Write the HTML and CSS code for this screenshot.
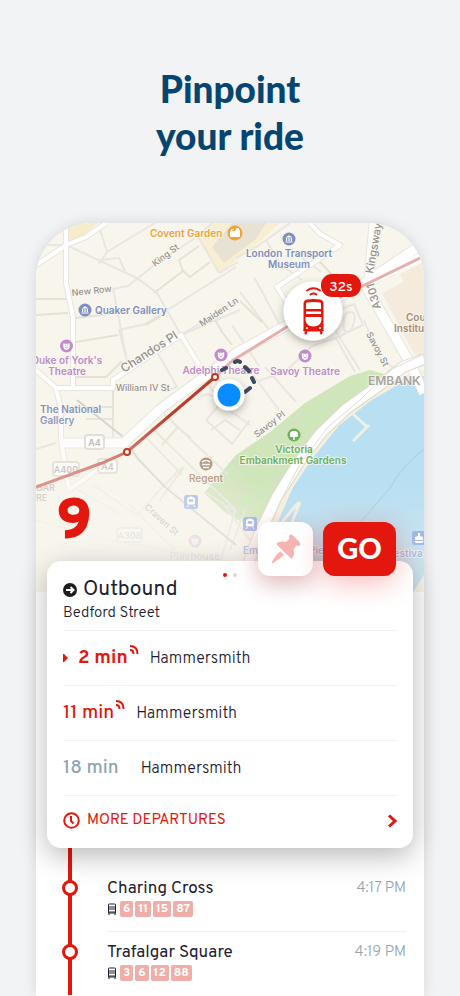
FILE: index.html
```
<!DOCTYPE html>
<html lang="en">
<head>
    <meta charset="UTF-8">
    <meta name="viewport" content="width=device-width, initial-scale=1.0">
    <title>Pinpoint your ride</title>
    <link rel="stylesheet" href="styles.css">
</head>
<body>
    <h1>Pinpoint<br>your ride</h1>

    <main class="phone">
        <svg class="map" viewBox="36 223 388 369" role="img" aria-label="Map of the route 9 bus">
            <defs>
                <radialGradient id="fade" gradientUnits="userSpaceOnUse" cx="95" cy="590" r="190">
                    <stop offset="0" stop-color="#f8f5ee"/>
                    <stop offset="0.45" stop-color="#f8f5ee" stop-opacity="0.7"/>
                    <stop offset="1" stop-color="#f8f5ee" stop-opacity="0"/>
                </radialGradient>
                <linearGradient id="fadeDown" x1="0" y1="0" x2="0" y2="1">
                    <stop offset="0" stop-color="#f8f5ee" stop-opacity="0"/>
                    <stop offset="1" stop-color="#f8f5ee" stop-opacity="0.4"/>
                </linearGradient>
                <filter id="drop" x="-50%" y="-50%" width="200%" height="200%">
                    <feDropShadow dx="0" dy="3" stdDeviation="4" flood-opacity="0.3"/>
                </filter>
                <g id="mask">
                    <circle r="6.5"/>
                    <path d="M-3.2-2.8Q0-1.8 3.2-2.8V.5Q3 3.3 0 4Q-3 3.3-3.2.5Z" fill="#fff"/>
                    <path d="M-1.6-.8h.8M.8-.8h.8M-1.4 1.2Q0 2.6 1.4 1.2" stroke="#c79bd0" fill="none"/>
                </g>
                <g id="museum">
                    <circle r="6.5"/>
                    <path d="M-3.6-1.6L0-3.8 3.6-1.6ZM-3.6 2.4h7.2v1.2h-7.2ZM-3-1h1.2v3H-3ZM-.6-1H.6v3H-.6ZM1.8-1H3v3H1.8Z" fill="#fff"/>
                </g>
                <g id="station">
                    <rect x="-7" y="-7" width="14" height="14" rx="2.5"/>
                    <path d="M-3.5-3Q-3.500-5 0-5T3.500-3V2H-3.500ZM-2.500 3L-4 5M2.500 3L4 5" fill="#fff" stroke="#fff"/>
                    <path d="M-2.200-2.800H2.200V-.3H-2.200Z"/>
                </g>
            </defs>

            <rect x="36" y="223" width="388" height="369" fill="#f8f5ec"/>

            <!-- blocks, park, river -->
            <path d="M68 223H98L86 234 68 242Z" fill="#f6ebcb"/>
            <path d="M196 237L212 223H280L262 240 220 273Z" fill="#f8efd2"/>
            <path d="M212 247L232 223H266L256 239 224 263Z" fill="#e8e2d5"/>
            <path d="M382 293L404 282 400 274 424 262V360L413 352Z" fill="#f5ebdd"/>
            <path d="M204 493L236 455 270 432 305 403 350 376 370 370 388 375 350 400 318 430 295 470 268 522 255 530 225 512Z" fill="#cfe6bb"/>
            <path d="M424 376L400 382 370 401 340 424 313 457 293 487 278 520 266 592H413L424 575Z" fill="#b8dff2"/>
            <path d="M424 372L398 382 370 398 338 423 311 456 290 487 276 520 264 592" class="shore"/>
            <path d="M352 413L367 427M353 441L369 425" class="pier"/>
            <path d="M300 502L289 530M282 522L299 502" class="pier"/>
            <path d="M424 449Q400 468 390 488L345 540" fill="none" stroke="#a5cbe1"/>

            <!-- small streets -->
            <g class="lane">
                <path d="M36 245H66L137 278 157 293 181 335 240 310"/>
                <path d="M181 335L236 301M113 289L128 286 157 263 198 236 219 273"/>
                <path d="M113 288L127 361 119 330 145 324 236 267"/>
                <path d="M100 230L107 252 99 264M100 260L119 258 125 271M107 252L130 238 155 223"/>
                <path d="M198 236L212 223M219 273L238 262M157 352L177 387 165 391"/>
                <path d="M236 258L258 246 290 223M266 240L280 264 302 280M302 290L335 330 360 370"/>
                <path d="M232 325L259 366M240 292L274 336M254 277L281 327M290 249L321 272"/>
                <path d="M342 309L354 304 363 325 336 338 312 346 285 372 258 381M336 338L355 372"/>
                <path d="M251 372L279 410M265 367L296 402M364 320L378 356 397 371"/>
                <path d="M200 372L222 405 250 425M198 400Q206 388 222 402L206 420 232 444 250 420"/>
                <path d="M151 427L205 480 236 510M164 414L228 475M175 425L191 438M145 436L182 475M211 430L225 420 240 430"/>
                <path d="M93 485L137 515 160 490 181 468M78 490L120 514M140 525L100 552 60 546M128 503L175 550"/>
                <path d="M205 492L235 511 221 560M224 505L250 540M230 550L245 510M36 520L100 538 220 560"/>
            </g>
            <g class="block">
                <path d="M36 299H66M36 315L68 313M75 318L110 314M76 342L118 335M75 377H106L122 361"/>
                <path d="M154 293L183 271 179 260 199 246M183 271L190 277 210 262M145 325L165 314"/>
                <path d="M240 301L262 322M318 260L338 281M113 390V437M36 449L56 443M86 407H113M86 419H113"/>
                <path d="M215 320L222 332 232 345M162 445L178 427M160 500L184 467"/>
            </g>
            <path d="M344 330Q342 312 350 312T352 328Q348 334 344 330" class="lane"/>
            <path d="M77 400L122 436 138 459 165 487 236 545" class="rail"/>
            <g class="path">
                <path d="M211 485L268 450 318 398 350 385M232 461L250 520M213 498Q230 475 256 497T270 475M224 469L240 515M268 434L275 449M290 418L301 425M236 520Q258 500 290 470"/>
                <path d="M246 448L252 481 232 506M275 449L282 486"/>
            </g>

            <!-- main streets -->
            <g class="road-edge">
                <path d="M424 243L363 284 236 353 159 410 124 443H62"/>
                <path d="M374 223L370 270 368 290 410 363 424 393"/>
            </g>
            <g class="road-edge thin">
                <path d="M66 223V283L73 317V387M36 265L56 252 66 245 86 237 106 223"/>
                <path d="M36 370L56 388H113V380L181 335 199 365M56 388L61 410V440L69 490M69 490L116 457"/>
                <path d="M310 223L320 234 340 245 277 287 287 303"/>
            </g>
            <g class="road">
                <path d="M66 223V283L73 317V387M36 265L56 252 66 245 86 237 106 223"/>
                <path d="M36 370L56 388H113V380L181 335 199 365M56 388L61 410V440L69 490M69 490L116 457"/>
                <path d="M310 223L320 234 340 245 277 287 287 303"/>
            </g>
            <g class="road wide">
                <path d="M424 243L363 284 236 353 159 410 124 443H62"/>
                <path d="M424 256L370 280M374 223L370 270 368 290 410 363 424 393"/>
            </g>
            <path d="M424 359L403 367 377 387 346 409 320 434 297 465 277 497 260 532 238 592" class="quay-edge"/>
            <path d="M424 359L403 367 377 387 346 409 320 434 297 465 277 497 260 532 238 592" class="quay"/>
            <path d="M424 354L392 369 361 399 328 427 300 464 280 502 263 547 245 592" class="quay-line"/>

            <!-- road and place names -->
            <g class="label street">
                <text transform="translate(155 267) rotate(-37)">King St</text>
                <text transform="translate(72 296) rotate(-6)">New Row</text>
                <text transform="translate(124 373) rotate(-33)" class="big">Chandos Pl</text>
                <text transform="translate(202 327) rotate(-34)">Maiden Ln</text>
                <text x="116" y="391">William IV St</text>
                <text transform="translate(373 274) rotate(-80)" class="kingsway">Kingsway</text>
                <text transform="translate(381 308) rotate(-106)" class="kingsway">A301</text>
                <text transform="translate(366 334) rotate(62)">Savoy St</text>
                <text transform="translate(257 438) rotate(-38)">Savoy Pl</text>
                <text transform="translate(144 508) rotate(42)">Craven St</text>
            </g>
            <g class="label district">
                <text x="368" y="385">EMBANK</text>
                <text x="36" y="491" class="faint">GAR</text>
                <text x="36" y="501" class="faint">RE</text>
            </g>
            <g class="shield">
                <rect x="85" y="435" width="19" height="14" rx="3"/><text x="94.500" y="446">A4</text>
                <rect x="98" y="459" width="19" height="14" rx="3"/><text x="107.500" y="470">A4</text>
                <rect x="53" y="462" width="26" height="14" rx="3"/><text x="66" y="473">A400</text>
                <rect x="117" y="528" width="25" height="14" rx="3"/><text x="129.500" y="539">A308</text>
            </g>
            <g class="label culture">
                <use href="#museum" x="85" y="310"/><text x="95" y="314">Quaker Gallery</text>
                <use href="#museum" x="289" y="239"/>
                <text x="289" y="257" class="mid">London Transport</text><text x="289" y="268" class="mid">Museum</text>
                <text x="40" y="413">The National</text><text x="40" y="424">Gallery</text>
            </g>
            <g class="label theatre">
                <use href="#mask" x="66.500" y="346"/>
                <text x="67" y="364" class="mid">Duke of York's</text><text x="67" y="375" class="mid">Theatre</text>
                <use href="#mask" x="221" y="355"/><text x="221" y="374" class="mid">Adelphi Theatre</text>
                <use href="#mask" x="305" y="356"/><text x="305" y="375" class="mid">Savoy Theatre</text>
                <g opacity="0.5"><use href="#mask" x="195" y="541"/><text x="195" y="560" class="mid">Playhouse</text></g>
            </g>
            <g class="label shop">
                <text x="150" y="237">Covent Garden</text>
                <circle cx="235" cy="233" r="7.500"/>
                <path d="M230.500 231.500H235V236.500H230.500ZM235.500 230.500H239.500V236.500H235.500ZM231.500 231V229.500H234M236.500 230V228.500H238.500V230" class="bag"/>
            </g>
            <g class="label school"><text x="406" y="321">Cou</text><text x="394" y="332">Institu</text></g>
            <g class="label garden">
                <circle cx="294" cy="435" r="6.500"/>
                <path d="M293.300 440V437Q289 437.500 290 434.500Q289.500 431 294 431T298 434.500Q299 437.500 294.700 437V440Z" fill="#fff"/>
                <text x="294" y="453" class="mid">Victoria</text><text x="293" y="464" class="mid">Embankment Gardens</text>
            </g>
            <g class="label hotel">
                <circle cx="206" cy="464" r="6.500"/>
                <path d="M202 462Q206 459 210 462M202 464.500H210M203 467.500H209" stroke="#fff" stroke-width="1.600" fill="none"/>
                <text x="206" y="482" class="mid">Regent</text>
            </g>
            <g class="label transit">
                <use href="#station" x="191" y="502"/>
                <use href="#station" x="250" y="524"/>
                <rect x="412" y="531" width="14" height="14" rx="2.500"/>
                <path d="M418 533h2v3l3 1v3h-8v-3l3-1ZM414 541h10l-2 2h-6Z" fill="#fff"/>
                <text x="243" y="554">Embankment Pier</text><text x="388" y="557">Festiva</text>
            </g>

            <!-- route -->
            <path d="M215 377L232 361 290 325 342 296 424 256" class="route-ahead"/>
            <path d="M36 487L102 463 127 452 215 377" class="route-done"/>
            <rect x="36" y="400" width="388" height="192" fill="url(#fade)"/>
            <rect x="36" y="480" width="388" height="112" fill="url(#fadeDown)"/>
            <path d="M222 370L226 368M235 362Q237 360 240 362M245 367L249 371M252 378L254 382M250 388L245 392" class="walk"/>
            <g class="stop-dot"><circle cx="127" cy="452" r="3"/><circle cx="215" cy="377" r="3"/></g>
            <g filter="url(#drop)"><circle cx="229" cy="395" r="15.500" fill="#fff"/></g>
            <circle cx="229" cy="395" r="11.500" fill="#078dff"/>

            <!-- live vehicle -->
            <g filter="url(#drop)"><circle cx="313" cy="311" r="29.500" fill="#fff"/></g>
            <g class="bus">
                <path d="M307 290.500Q313.500 286 320 290.500M310.500 294.500Q313.500 292.500 316.500 294.500" class="wave"/>
                <path fill-rule="evenodd" d="M307 299.500Q313.500 298.500 320 299.500Q323.500 300 323.500 304V329.500L324 331H322.500V333Q322.500 334.500 321.300 334.500T320 333V331.500H307V333Q307 334.500 305.700 334.500T304.500 333V331H303L303.500 329.500V304Q303.500 300 307 299.500ZM307 302.500Q306 302.800 306 304V309H321V304Q321 302.800 320 302.500Q313.500 301.500 307 302.500ZM306 311.500V314H321V311.500ZM305.500 317V320Q306.500 326.500 313.500 326.500T321.500 320V317Z"/>
                <circle cx="307" cy="328" r="1" fill="#fff"/><circle cx="320" cy="328" r="1" fill="#fff"/>
            </g>
            <rect x="321" y="274" width="40" height="23" rx="11" fill="#e3170d"/>
            <text x="341" y="291" class="eta">32s</text>
        </svg>

        <div class="route-bar">
            <strong class="route-number">9</strong>
            <button class="pin-button" aria-label="Pin this route">
                <svg width="30" height="30" viewBox="0 0 30 30" aria-hidden="true">
                    <path d="M18.500 1Q20.500 0 22 1.500L28.500 8Q30 10 28.500 11.500Q27.500 12 25.500 11.500L22.500 15.500Q24 20 21.500 24Q20.500 25 19.500 24L6 11Q5 10 6.500 8.800Q10 6.500 14.500 8L18.500 5Q17.500 2 18.500 1ZM9.500 17.500L13 21Q9 25 2 29Q.5 29.500 1 28Q5 20 9.500 17.500Z"/>
                </svg>
            </button>
            <button class="go-button">GO</button>
        </div>

        <section class="card">
            <div class="dots"><i class="on"></i><i></i></div>
            <header class="card-head">
                <h2>
                    <svg width="14" height="14" viewBox="0 0 14 14" aria-hidden="true">
                        <circle cx="7" cy="7" r="7" fill="#1d1d1f"/>
                        <path d="M3 7H10M7.500 4L10.500 7 7.500 10" fill="none" stroke="#fff" stroke-width="2"/>
                    </svg>
                    Outbound
                </h2>
                <p>Bedford Street</p>
            </header>
            <ul class="departures">
                <li>
                    <svg class="next" width="5" height="8" viewBox="0 0 5 8" aria-hidden="true"><path d="M0 0H1L5 4 1 8H0Z"/></svg>
                    <b class="live soon">2 min</b>
                    <svg class="signal" width="10" height="10" viewBox="0 0 10 10" aria-hidden="true"><path d="M1 5Q4.500 5 4.500 9M1 1Q8.500 1 8.500 9"/></svg>
                    <span>Hammersmith</span>
                </li>
                <li>
                    <b class="live">11 min</b>
                    <svg class="signal" width="10" height="10" viewBox="0 0 10 10" aria-hidden="true"><path d="M1 5Q4.500 5 4.500 9M1 1Q8.500 1 8.500 9"/></svg>
                    <span>Hammersmith</span>
                </li>
                <li>
                    <b>18 min</b>
                    <svg class="signal" width="10" height="10" aria-hidden="true"></svg>
                    <span>Hammersmith</span>
                </li>
            </ul>
            <button class="more">
                <svg width="17" height="17" viewBox="0 0 17 17" aria-hidden="true"><circle cx="8.500" cy="8.500" r="7.300"/><path d="M8 4V9L10.500 11.500"/></svg>
                <span>MORE DEPARTURES</span>
                <svg class="chevron" width="10" height="14" viewBox="0 0 10 14" aria-hidden="true"><path d="M2 1.500L8 7 2 12.500"/></svg>
            </button>
        </section>

        <ul class="stops">
            <li>
                <i class="marker"></i>
                <div class="stop">
                    <div class="stop-name">Charing Cross <time>4:17 PM</time></div>
                    <div class="lines">
                        <svg width="10" height="12" viewBox="0 0 10 12" aria-hidden="true"><path d="M1.500 10V2Q1.500 1 2.500 1H7.500Q8.500 1 8.500 2V10ZM1.500 4H8.500M1.500 6H8.500M2 9H8M2 10V12M8 10V12"/></svg>
                        <span>6</span><span>11</span><span>15</span><span>87</span>
                    </div>
                </div>
            </li>
            <li>
                <i class="marker"></i>
                <div class="stop">
                    <div class="stop-name">Trafalgar Square <time>4:19 PM</time></div>
                    <div class="lines">
                        <svg width="10" height="12" viewBox="0 0 10 12" aria-hidden="true"><path d="M1.500 10V2Q1.500 1 2.500 1H7.500Q8.500 1 8.500 2V10ZM1.500 4H8.500M1.500 6H8.500M2 9H8M2 10V12M8 10V12"/></svg>
                        <span>3</span><span>6</span><span>12</span><span>88</span>
                    </div>
                </div>
            </li>
        </ul>
    </main>
</body>
</html>
```
FILE: styles.css
```
* {
    box-sizing: border-box;
}
body {
    display: flex;
    flex-direction: column;
    min-height: 100vh;
    margin: 0;
    background-color: #f1f3f5;
    color: #1d2030;
    font-family: Overpass, Roboto, sans-serif;
}
h1, h2, p, ul {
    margin: 0;
    padding: 0;
    font-weight: normal;
}
li {
    list-style: none;
}
button {
    border: none;
    cursor: pointer;
    font-family: inherit;
}
h1 {
    padding: 65px 0 64px;
    color: #06456f;
    font-family: Lato, sans-serif;
    font-size: 37px;
    font-weight: 900;
    line-height: 47px;
    text-align: center;
}
.phone {
    flex: 1;
    margin: 0 36px;
    border-radius: 56px 56px 0 0;
    background-color: #fff;
    box-shadow: 0 0 14px rgba(0, 0, 0, 0.12);
}

/* map */
.map {
    display: block;
    width: 100%;
    border-radius: 56px 56px 0 0;
}
.shore, .pier, .lane, .block, .rail, .path, .road, .road-edge, .quay, .quay-edge, .quay-line {
    fill: none;
    stroke-linejoin: round;
}
.shore { stroke: #f4efdf; stroke-width: 5; }
.pier { stroke: #f1eee4; stroke-width: 3; }
.lane { stroke: #e9e6e2; stroke-width: 2; }
.block { stroke: #e5e2d5; stroke-width: 2; }
.rail { stroke: #d2d0cb; stroke-width: 2; }
.path { stroke: #dddccb; stroke-width: 1; }
.road { stroke: #fff; stroke-width: 4; }
.road-edge { stroke: #e8e5de; stroke-width: 11; }
.thin { stroke-width: 6; }
.wide { stroke-width: 9; }
.quay-edge { stroke: #ddd9cf; stroke-width: 12; }
.quay { stroke: #fff; stroke-width: 10; }
.quay-line { stroke: #dfddd5; stroke-width: 1; }
.label {
    font-family: Inter, sans-serif;
    font-size: 10px;
    font-weight: 600;
}
.label text {
    paint-order: stroke;
    stroke: #fbf9f3;
    stroke-opacity: 0.7;
    stroke-width: 2px;
    stroke-linejoin: round;
}
.mid { text-anchor: middle; }
.street { fill: #96928f; font-size: 9px; font-weight: 500; }
.big { font-size: 12px; }
.kingsway { font-size: 11px; }
.district { fill: #a7a59f; font-size: 12px; }
.faint { font-size: 9px; }
.culture { fill: #7d8fc0; }
.theatre { fill: #c08cc9; }
.shop { fill: #efa33a; }
.bag { fill: #fff; stroke: #fff; }
.school { fill: #a68b78; }
.garden { fill: #6fae5c; }
.hotel { fill: #a98b70; }
.transit { fill: #8fabe4; }
.shield rect { fill: #fff; stroke: #d8d6d0; stroke-width: 2; }
.shield text {
    fill: #a9a7a2;
    font: 600 9px Inter, sans-serif;
    text-anchor: middle;
}
.route-ahead { fill: none; stroke: #e6b0ad; stroke-width: 3; }
.route-done { fill: none; stroke: #bf3a2e; stroke-width: 3; }
.walk { fill: none; stroke: #3d4a63; stroke-width: 4; stroke-linecap: round; }
.stop-dot { fill: #fff; stroke: #bf3a2e; stroke-width: 2; }
.bus { fill: #e3170d; }
.wave { fill: none; stroke: #e3170d; stroke-width: 2; stroke-linecap: round; }
.eta {
    fill: #fff;
    font-size: 14px;
    font-weight: 500;
    text-anchor: middle;
}

/* route number and buttons, over the map */
.route-bar {
    position: relative;
    z-index: 2;
    display: flex;
    gap: 10px;
    height: 54px;
    margin-top: -70px;
    padding: 0 28px 0 20px;
}
.route-number {
    flex: 1;
    color: #e3170d;
    font-size: 58px;
    font-weight: 900;
    line-height: 4px;
}
.pin-button, .go-button {
    display: flex;
    align-items: center;
    justify-content: center;
    padding: 0;
    border-radius: 12px;
}
.pin-button {
    width: 55px;
    background-color: #fff;
    box-shadow: 0 8px 22px rgba(150, 20, 20, 0.3);
}
.pin-button svg {
    fill: #f6b5b2;
}
.go-button {
    width: 73px;
    padding-bottom: 3px;
    background-color: #e3170d;
    box-shadow: 0 6px 28px rgba(227, 23, 13, 0.3);
    color: #fff;
    font-family: Lato, sans-serif;
    font-size: 29px;
    font-weight: 900;
}

/* departures card */
.card {
    position: relative;
    z-index: 1;
    margin: -15px 11px 0;
    padding: 0 16px;
    border-radius: 14px;
    background-color: #fff;
    box-shadow: 0 8px 28px rgba(0, 0, 0, 0.28);
}
.dots {
    display: flex;
    justify-content: center;
    gap: 6px;
    height: 17px;
    padding-top: 12px;
}
.dots i {
    width: 4px;
    height: 4px;
    border-radius: 50%;
    background-color: #f9cfcd;
}
.dots .on {
    background-color: #e3170d;
}
.card-head {
    padding-bottom: 6px;
}
h2 {
    display: flex;
    align-items: center;
    gap: 6px;
    font-size: 21px;
    line-height: 24px;
}
.card-head p {
    padding-top: 2px;
    font-size: 15px;
    font-weight: 300;
    line-height: 20px;
}
.departures li {
    display: flex;
    align-items: center;
    height: 55px;
    border-top: 1px solid #f1f2f4;
}
.departures b {
    color: #8fa3b0;
    font-size: 19px;
    font-weight: 500;
}
.departures .live {
    color: #e3170d;
}
.departures .soon {
    font-weight: 700;
}
.departures span {
    margin-left: 11px;
    padding-top: 2px;
    font-size: 16px;
    font-weight: 300;
}
.next {
    margin-right: 10px;
    fill: #e3170d;
}
.signal {
    margin: 0 0 16px 1px;
    fill: none;
    stroke: #e3170d;
    stroke-width: 2;
}
.more {
    display: flex;
    align-items: center;
    gap: 7px;
    width: 100%;
    height: 53px;
    padding: 0 0 3px;
    border-top: 1px solid #f1f2f4;
    background: none;
    color: #e3170d;
    font-size: 15px;
    font-weight: 400;
}
.more svg {
    fill: none;
    stroke: #e3170d;
    stroke-width: 2;
}
.more .chevron {
    margin-left: auto;
    stroke-width: 3;
}

/* stop list */
.stops {
    padding: 19px 18px 0 26px;
    background: linear-gradient(#e3170d, #e3170d) 32px 0 / 4px 100% no-repeat;
}
.stops li {
    display: flex;
    gap: 29px;
}
.marker {
    width: 16px;
    height: 16px;
    margin-top: 13px;
    border: 3px solid #e3170d;
    border-radius: 50%;
    background-color: #fff;
}
.stop {
    flex: 1;
    padding: 12px 0 14px;
}
.stops li + li .stop {
    border-top: 1px solid #eff0f2;
    padding-top: 11px;
}
.stop-name {
    display: flex;
    justify-content: space-between;
    font-size: 17px;
    font-weight: 400;
    line-height: 20px;
}
time {
    color: #93a6b2;
    font-size: 15px;
    font-weight: 300;
}
.lines {
    display: flex;
    align-items: center;
    gap: 2px;
    margin-top: 2px;
}
.lines svg {
    margin-right: 1px;
    fill: none;
    stroke: #1d2030;
}
.lines span {
    padding: 0 3px;
    border-radius: 2px;
    background-color: #efaea8;
    color: #fff;
    font-size: 12px;
    font-weight: 700;
    line-height: 16px;
}
```
